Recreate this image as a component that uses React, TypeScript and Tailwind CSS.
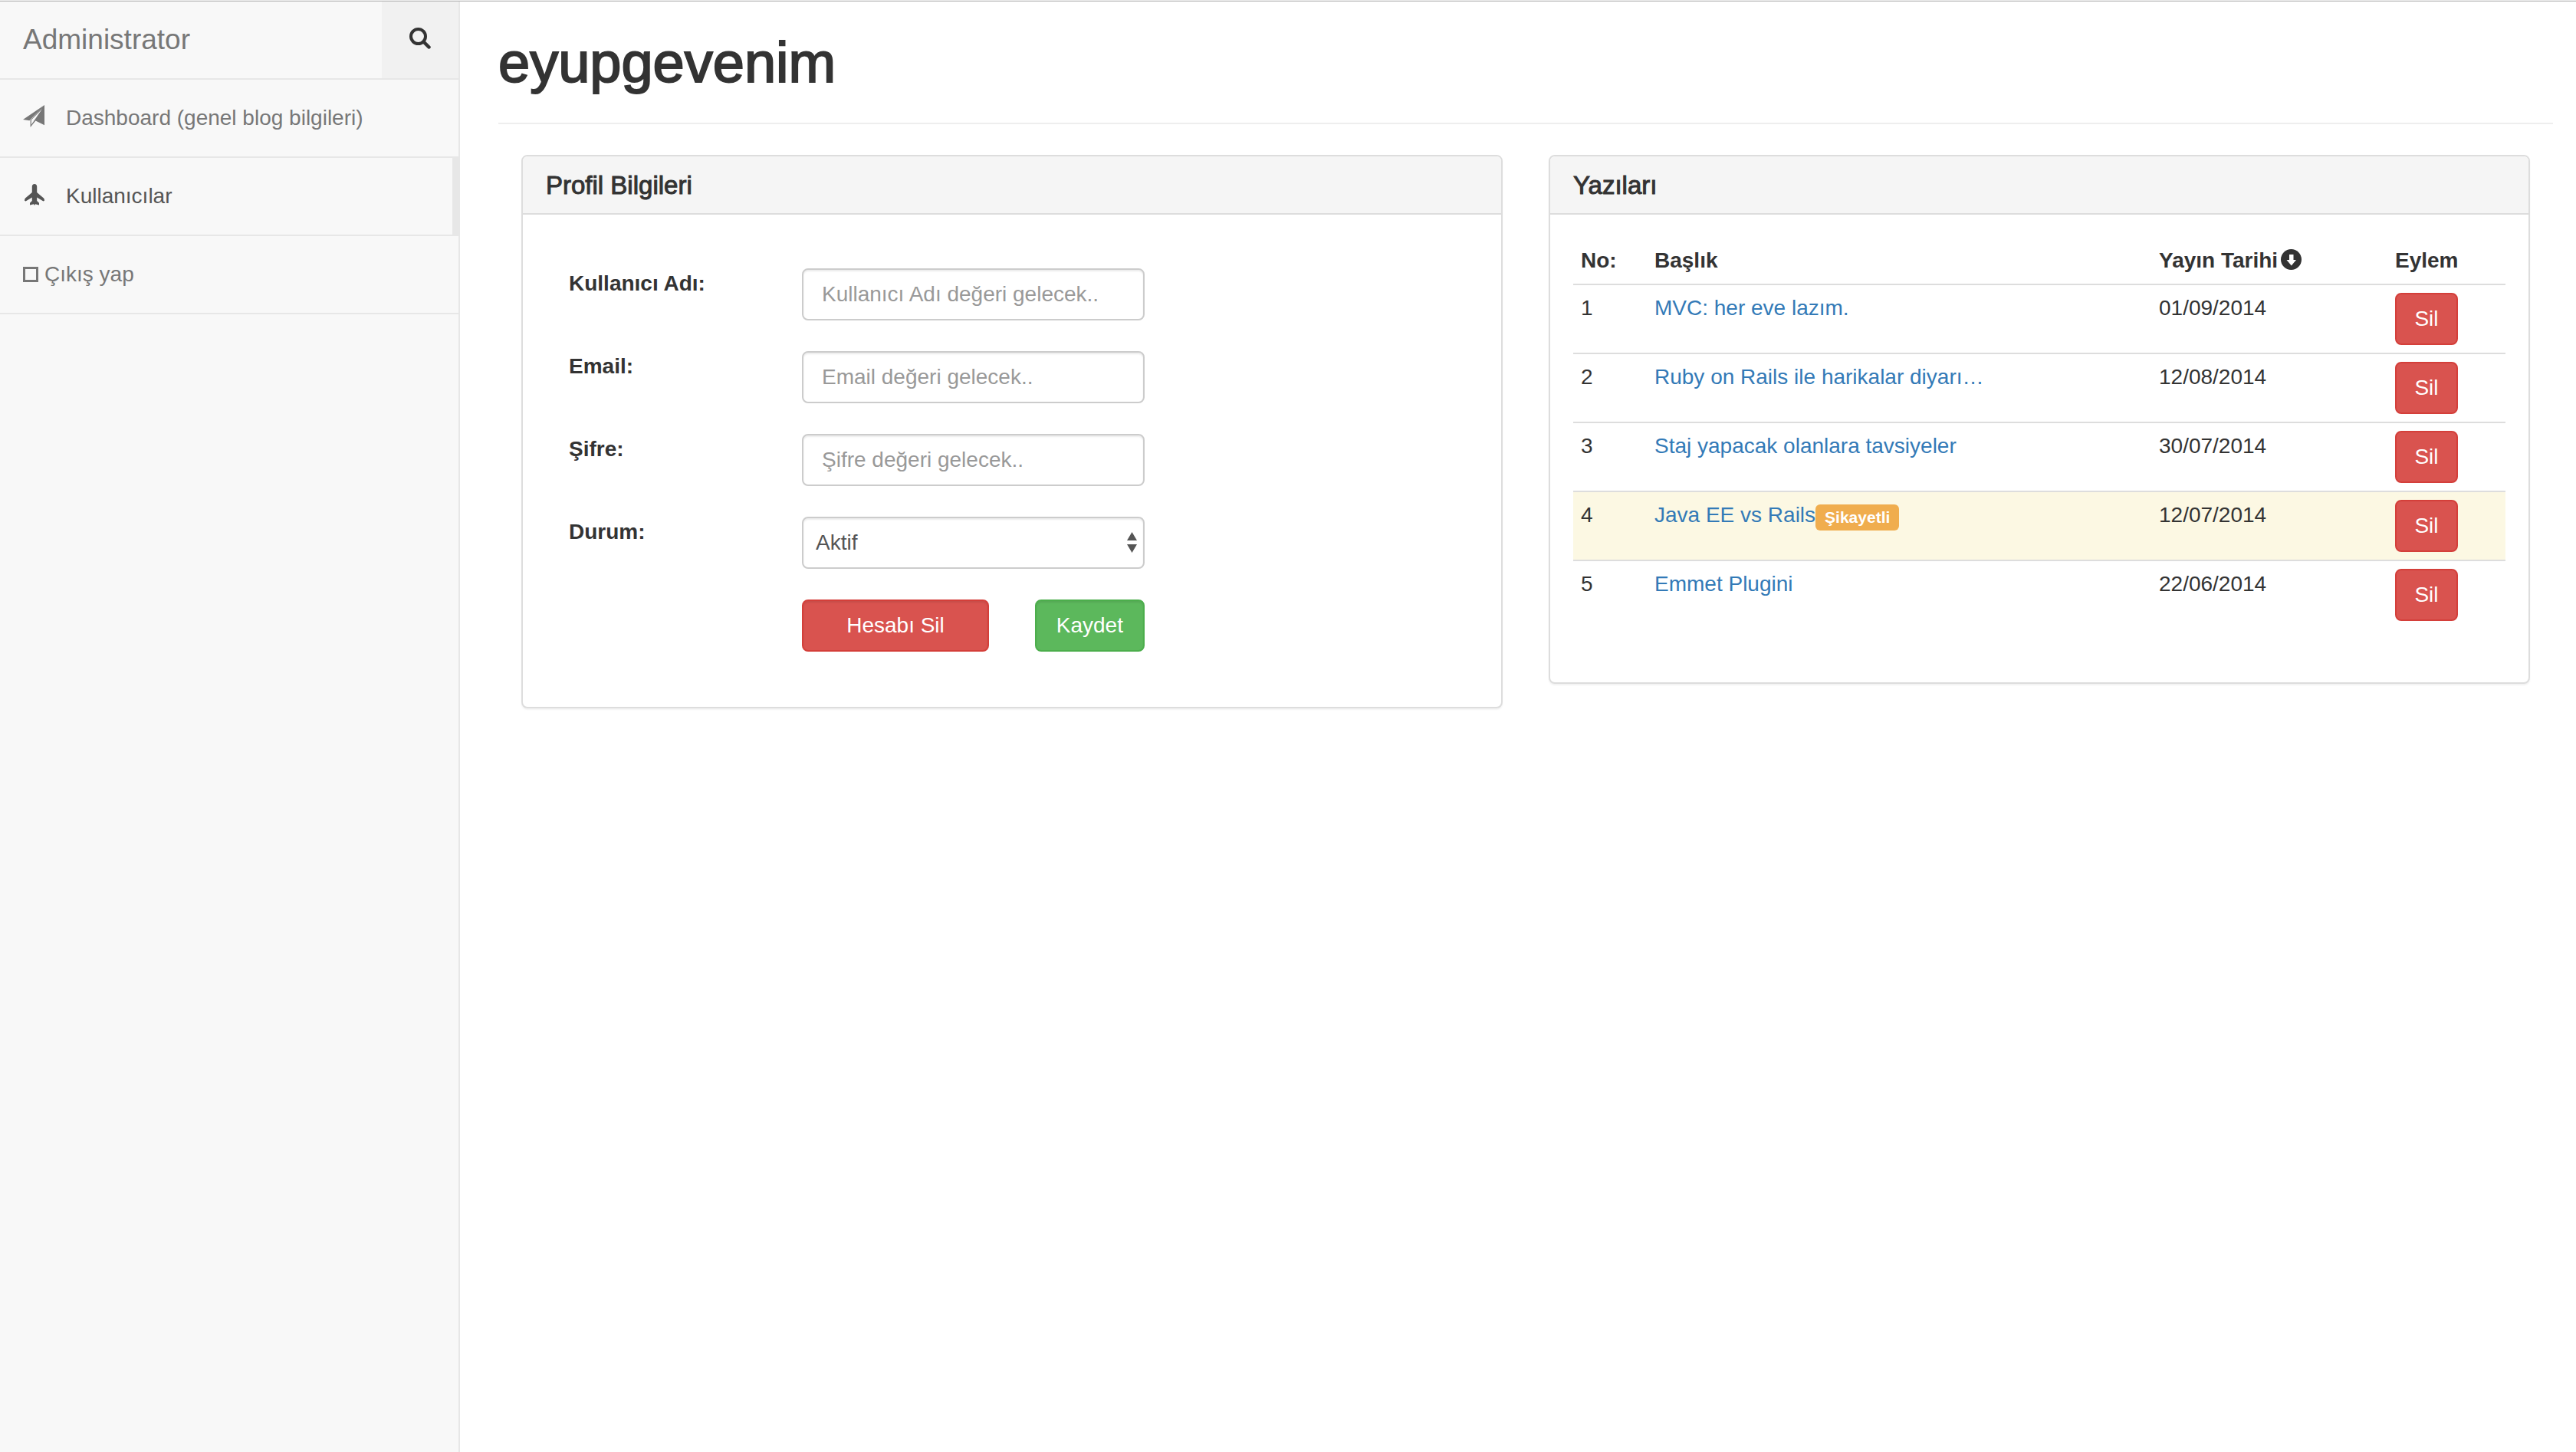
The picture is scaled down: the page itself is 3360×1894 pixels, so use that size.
import type { ReactNode } from "react";

type Post = { no: number; title: string; date: string; flagged?: boolean };

const posts: Post[] = [
  { no: 1, title: "MVC: her eve lazım.", date: "01/09/2014" },
  { no: 2, title: "Ruby on Rails ile harikalar diyarı…", date: "12/08/2014" },
  { no: 3, title: "Staj yapacak olanlara tavsiyeler", date: "30/07/2014" },
  { no: 4, title: "Java EE vs Rails", date: "12/07/2014", flagged: true },
  { no: 5, title: "Emmet Plugini", date: "22/06/2014" },
];

const fields = [
  { id: "username", label: "Kullanıcı Adı:", type: "text", placeholder: "Kullanıcı Adı değeri gelecek.." },
  { id: "email", label: "Email:", type: "email", placeholder: "Email değeri gelecek.." },
  { id: "password", label: "Şifre:", type: "password", placeholder: "Şifre değeri gelecek.." },
];

const control =
  "block h-[68px] w-full rounded-lg border-2 border-[#ccc] bg-white text-[28px] leading-10 text-[#555] shadow-[inset_0_2px_2px_rgba(0,0,0,0.075)] outline-none placeholder:text-[#999] placeholder:opacity-100 focus:border-[#66afe9]";

function SearchIcon() {
  return (
    <svg className="size-7" viewBox="0 0 28 28" fill="none" stroke="currentColor" aria-hidden="true">
      <circle cx="11.500" cy="11.500" r="9.500" strokeWidth="4" />
      <path d="M18.5 18.5 25.5 25.5" strokeWidth="4.500" strokeLinecap="round" />
    </svg>
  );
}

function SendIcon() {
  return (
    <svg className="h-[30px] w-7" viewBox="0 0 28 30" fill="currentColor" aria-hidden="true">
      <path d="M28 0 0 19l8.4 1.2zM28 0v26.2L16.4 20.6 9.6 29V19.8zM25 5 10.8 19.6v6.2z" fillRule="evenodd" />
    </svg>
  );
}

function PlaneIcon() {
  return (
    <svg className="h-7 w-[26px]" viewBox="0 0 26 28" fill="currentColor" aria-hidden="true">
      <path d="M13 0c2 0 3.2 1.4 3.2 3.6V11L25 18.600q1 1 1 3.200L24.500 22.500 16.200 17.600V22l2.800 2.800V27.500L14 26.200 13 28 12 26.200 7 27.500V24.800L9.800 22V17.600L1.500 22.500 0 21.800q0-2.200 1-3.200L9.800 11V3.600C9.800 1.400 11 0 13 0z" />
    </svg>
  );
}

function ArrowDownCircle() {
  return (
    <svg className="mb-1 size-[27px]" viewBox="0 0 27 27" aria-hidden="true">
      <circle cx="13.500" cy="13.500" r="13.500" fill="#333" />
      <path d="M11 7h5.500v7h3.500l-6.200 7.500L7.500 14H11z" fill="#fff" />
    </svg>
  );
}

function NavItem({ icon, active, children }: { icon: ReactNode; active?: boolean; children: ReactNode }) {
  return (
    <li className="border-b-2 border-[#e7e7e7]">
      <a
        href="#"
        aria-current={active ? "page" : undefined}
        className={
          active
            ? "flex h-[100px] items-center border-r-8 border-[#e7e7e7] pl-[30px] text-[#555]"
            : "flex h-[100px] items-center pl-[30px] text-[#777] hover:text-[#333]"
        }
      >
        {icon}
        {children}
      </a>
    </li>
  );
}

function Panel({ title, children }: { title: string; children: ReactNode }) {
  return (
    <section className="min-w-0 flex-1 rounded-lg border-2 border-[#ddd] bg-white shadow-[0_2px_2px_rgba(0,0,0,0.05)]">
      <h2 className="rounded-t-md border-b-2 border-[#ddd] bg-[#f5f5f5] px-[30px] pt-[21px] pb-[19px] text-[33px] leading-[34px] font-medium [-webkit-text-stroke:1px_#333]">
        {title}
      </h2>
      {children}
    </section>
  );
}

export default function App() {
  return (
    <div className="flex min-h-screen flex-col bg-white font-['Liberation_Sans',Arial,sans-serif] text-[28px] leading-10 text-[#333]">
      <div className="h-0.5 border-b border-[#b4b4b4] bg-[#f0f0f0]" />
      <div className="flex flex-1">
        <aside className="w-[600px] shrink-0 border-r-2 border-[#e7e7e7] bg-[#f8f8f8]">
          <div className="flex h-[102px] border-b-2 border-[#e7e7e7]">
            <a href="#" className="flex flex-1 items-center pl-[30px] text-[37px] leading-10 text-[#777]">
              Administrator
            </a>
            <button type="button" aria-label="Ara" className="flex w-[100px] items-center justify-center bg-[#f1f1f1] pb-1">
              <SearchIcon />
            </button>
          </div>
          <nav>
            <ul>
              <NavItem icon={<span className="flex w-14 pb-1"><SendIcon /></span>}>Dashboard (genel blog bilgileri)</NavItem>
              <NavItem active icon={<span className="flex w-14 pb-1 pl-0.5"><PlaneIcon /></span>}>Kullanıcılar</NavItem>
              <NavItem icon={<span className="mr-2 size-5 border-3 border-[#777]" />}>Çıkış yap</NavItem>
            </ul>
          </nav>
        </aside>

        <main className="min-w-0 flex-1 pr-[30px] pl-[50px]">
          <h1 className="border-b-2 border-[#eee] pt-10 pb-[38px] text-[74px] leading-20 font-medium [-webkit-text-stroke:2px_#333]">
            eyupgevenim
          </h1>
          <div className="mt-10 flex items-start gap-[60px] px-[30px]">
            <Panel title="Profil Bilgileri">
              <form className="px-[30px] pt-[70px] pb-[72px]" onSubmit={(e) => e.preventDefault()}>
                <div className="grid grid-cols-12 gap-x-[60px] gap-y-10 px-[30px]">
                  {fields.map((f) => (
                    <div key={f.id} className="col-span-12 grid grid-cols-subgrid">
                      <label htmlFor={f.id} className="col-span-3 font-bold">
                        {f.label}
                      </label>
                      <div className="col-span-5">
                        <input id={f.id} type={f.type} placeholder={f.placeholder} className={`${control} px-6`} />
                      </div>
                    </div>
                  ))}
                  <label htmlFor="status" className="col-span-3 font-bold">
                    Durum:
                  </label>
                  <div className="relative col-span-5">
                    <select id="status" defaultValue="Aktif" className={`${control} appearance-none px-4`}>
                      <option>Aktif</option>
                      <option>Pasif</option>
                    </select>
                    <svg
                      className="pointer-events-none absolute top-5 right-2.5 h-7 w-[13px]"
                      viewBox="0 0 13 28"
                      fill="#555"
                      aria-hidden="true"
                    >
                      <path d="M6.500 0 13 11H0zM0 16h13L6.500 27z" />
                    </svg>
                  </div>
                  <button type="button" className="col-span-3 col-start-4 h-[68px] rounded-lg border-2 border-[#d43f3a] bg-[#d9534f] text-white shadow-[inset_0_2px_2px_rgba(0,0,0,0.075)]">
                    Hesabı Sil
                  </button>
                  <button type="submit" className="col-span-2 h-[68px] rounded-lg border-2 border-[#4cae4c] bg-[#5cb85c] text-white shadow-[inset_0_2px_2px_rgba(0,0,0,0.075)]">
                    Kaydet
                  </button>
                </div>
              </form>
            </Panel>

            <Panel title="Yazıları">
              <div className="px-[30px] pt-[30px] pb-[70px]">
                <table className="w-full table-fixed border-separate border-spacing-0 text-left">
                  <thead>
                    <tr>
                      <th className="w-24 p-2.5 font-bold">No:</th>
                      <th className="p-2.5 font-bold">Başlık</th>
                      <th className="w-[308px] p-2.5 font-bold">
                        <span className="flex items-center gap-1">
                          Yayın Tarihi <ArrowDownCircle />
                        </span>
                      </th>
                      <th className="w-[154px] p-2.5 font-bold">Eylem</th>
                    </tr>
                  </thead>
                  <tbody>
                    {posts.map((p) => (
                      <tr key={p.no} className={p.flagged ? "bg-[#fcf8e3] align-top" : "align-top"}>
                        <td className="border-t-2 border-[#ddd] p-2.5">{p.no}</td>
                        <td className="border-t-2 border-[#ddd] p-2.5">
                          <div className="flex">
                            <a href="#" className="text-[#337ab7] hover:underline">
                              {p.title}
                            </a>
                            {p.flagged && (
                              <span className="mt-1.5 h-[34px] rounded-md bg-[#f0ad4e] px-3 text-[21px] leading-[33px] font-bold text-white">
                                Şikayetli
                              </span>
                            )}
                          </div>
                        </td>
                        <td className="border-t-2 border-[#ddd] p-2.5">{p.date}</td>
                        <td className="border-t-2 border-[#ddd] p-2.5">
                          <button type="button" className="block h-[68px] w-[82px] rounded-lg border-2 border-[#d43f3a] bg-[#d9534f] text-white">
                            Sil
                          </button>
                        </td>
                      </tr>
                    ))}
                  </tbody>
                </table>
              </div>
            </Panel>
          </div>
        </main>
      </div>
    </div>
  );
}
